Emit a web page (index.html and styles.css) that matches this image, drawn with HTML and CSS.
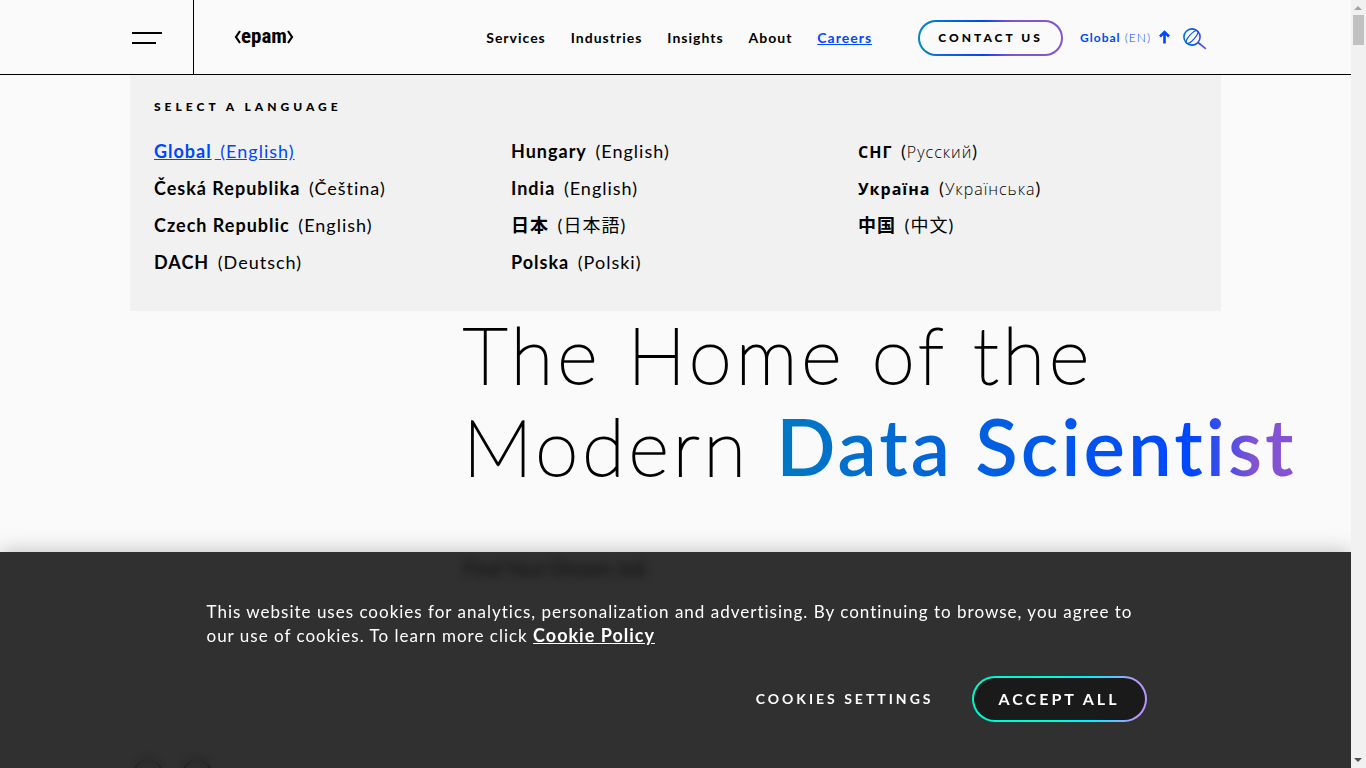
FILE: index.html
```html
<!DOCTYPE html>
<html lang="en">
<head>
<meta charset="utf-8">
<title>EPAM Careers</title>
<link rel="stylesheet" href="styles.css">
</head>
<body>
<div class="window">
  <div class="page">
    <header class="header">
      <button class="menu" type="button" aria-label="Menu"><span class="menu-line"></span><span class="menu-line menu-line-short"></span></button>
      <a class="logo" href="#">
        <svg width="7" height="14" viewBox="0 0 7 14"><path d="M6 1L2 7L6 13" fill="none" stroke="#000" stroke-width="2.200"/></svg>
        <span>epam</span>
        <svg width="7" height="14" viewBox="0 0 7 14"><path d="M1 1L5 7L1 13" fill="none" stroke="#000" stroke-width="2.200"/></svg>
      </a>
      <nav class="nav">
        <a href="#">Services</a>
        <a href="#">Industries</a>
        <a href="#">Insights</a>
        <a href="#">About</a>
        <a class="active" href="#">Careers</a>
      </nav>
      <a class="contact" href="#">CONTACT US</a>
      <button class="locale" type="button"><span><b>Global</b> (EN)</span>
        <svg width="11" height="14" viewBox="0 0 11 14"><path d="M5.500 13.500V2M1 6.500L5.500 2L10 6.500" fill="none" stroke="#0047ff" stroke-width="2.600"/></svg>
      </button>
      <button class="search" type="button" aria-label="Search">
        <svg width="24" height="22" viewBox="0 0 24 22">
          <defs><linearGradient id="lens" gradientUnits="userSpaceOnUse" x1="0" y1="0" x2="24" y2="0"><stop offset="0" stop-color="#0078c2"/><stop offset=".5" stop-color="#0047ff"/><stop offset="1" stop-color="#8453d2"/></linearGradient></defs>
          <g fill="none" stroke="url(#lens)"><circle cx="9" cy="9" r="8.100" stroke-width="1.600"/><ellipse cx="9" cy="9" rx="2.800" ry="8.300" transform="rotate(42 9 9)" stroke-width="1"/><path d="M15 14.500L23 20.800" stroke-width="1.700"/></g>
        </svg>
      </button>
    </header>
    <section class="languages">
      <h2>SELECT A LANGUAGE</h2>
      <div class="language-columns">
        <ul>
          <li><a class="active" href="#"><b>Global</b> (English)</a></li>
          <li><a href="#"><b>Česká Republika</b> (Čeština)</a></li>
          <li><a href="#"><b>Czech Republic</b> (English)</a></li>
          <li><a href="#"><b>DACH</b> (Deutsch)</a></li>
        </ul>
        <ul>
          <li><a href="#"><b>Hungary</b> (English)</a></li>
          <li><a href="#"><b>India</b> (English)</a></li>
          <li><a href="#" lang="ja"><b>日本</b> (日本語)</a></li>
          <li><a href="#"><b>Polska</b> (Polski)</a></li>
        </ul>
        <ul>
          <li><a href="#" lang="ru"><b>СНГ</b> (<span>Русский</span>)</a></li>
          <li><a href="#" lang="uk"><b>Україна</b> (<span>Українська</span>)</a></li>
          <li><a href="#" lang="zh"><b>中国</b> (中文)</a></li>
        </ul>
      </div>
    </section>
    <main class="hero">
      <h1>The Home of the<br>Modern <span class="gradient-text">Data Scientist</span></h1>
      <a class="find-job" href="#">Find Your Dream Job</a>
      <div class="slider-controls"><button type="button" aria-label="Previous"></button><button type="button" aria-label="Next"></button></div>
    </main>
    <section class="cookies">
      <div class="cookies-inner">
        <p>This website uses cookies for analytics, personalization and advertising. By continuing to browse, you agree to our use of cookies. To learn more click <a href="#">Cookie Policy</a></p>
        <div class="cookies-actions">
          <button class="settings" type="button">COOKIES SETTINGS</button>
          <button class="accept" type="button">ACCEPT ALL</button>
        </div>
      </div>
    </section>
  </div>
  <div class="scrollbar">
    <svg width="15" height="15" viewBox="0 0 15 15"><path d="M3 10H11L7 6Z" fill="#a3a3a3"/></svg>
    <div class="thumb"></div>
    <svg class="arrow-down" width="15" height="15" viewBox="0 0 15 15"><path d="M3 5H11L7 9Z" fill="#505050"/></svg>
  </div>
</div>
</body>
</html>
```
FILE: styles.css
```css
* { box-sizing: border-box; }
body {
  margin: 0;
  background: #fafafa;
  color: #000;
  font-family: Lato, "Noto Sans CJK JP", sans-serif;
}
a { color: inherit; text-decoration: none; }
button { border: 0; padding: 0; background: none; font: inherit; color: inherit; }
svg { display: block; flex: none; }
.window { display: flex; height: 100vh; overflow: hidden; }
.page { position: relative; flex: 1; display: flex; flex-direction: column; min-width: 0; overflow: hidden; }

.header {
  display: flex;
  align-items: center;
  flex: none;
  height: 75px;
  padding-right: 144px;
  border-bottom: 1px solid #000;
}
.menu {
  display: flex;
  flex-direction: column;
  justify-content: center;
  gap: 8px;
  width: 194px;
  height: 100%;
  padding: 2px 0 0 132px;
  border-right: 1px solid #000;
}
.menu-line { width: 30px; height: 2px; background: #000; }
.menu-line-short { width: 24px; }
.logo {
  display: flex;
  align-items: center;
  justify-content: space-between;
  width: 60px;
  margin-left: 40px;
  font: bold 21px "Liberation Sans Narrow", "Roboto Condensed", Roboto, sans-serif;
}
.logo span { padding-bottom: 3px; }
.nav {
  display: flex;
  gap: 25px;
  margin-left: auto;
  font-size: 14px;
  font-weight: 700;
  letter-spacing: 1px;
}
.nav .active { color: #0047ff; text-decoration: underline; }
.contact {
  display: flex;
  align-items: center;
  justify-content: center;
  width: 145px;
  height: 36px;
  margin: 2px 17px 0 46px;
  padding-bottom: 1px;
  border: 2px solid transparent;
  border-radius: 18px;
  background:
    linear-gradient(#fafafa, #fafafa) padding-box,
    linear-gradient(90deg, #0088c2, #0047ff 45%, #8453d2 65%, #8453d2) border-box;
  font-size: 12px;
  font-weight: 900;
  letter-spacing: 3px;
}
.locale {
  display: flex;
  align-items: center;
  gap: 8px;
  color: #0047ff;
  font-size: 12px;
  font-weight: 300;
  letter-spacing: 1px;
}
.locale b { font-weight: 700; }
.search { margin: 4px 0 0 13px; }

.languages {
  position: absolute;
  top: 75px;
  left: 130px;
  right: 130px;
  z-index: 1;
  padding: 23px 24px 30px;
  background: #f1f1f1;
}
.languages h2 {
  margin: 0 0 18px;
  font-size: 12px;
  line-height: 17px;
  font-weight: 900;
  letter-spacing: 4px;
}
.language-columns { display: grid; grid-template-columns: 357fr 347fr 339fr; }
.languages ul { margin: 0; padding: 0; list-style: none; }
.languages li { height: 37px; font-size: 18px; line-height: 37px; letter-spacing: 1px; white-space: nowrap; }
.languages b { margin-right: 3px; font-weight: 700; }
.languages .active { color: #0047ff; text-decoration: underline; }
.languages [lang="zh"] { font-family: Lato, "Noto Sans CJK SC", sans-serif; }
.languages [lang="ru"] b, .languages [lang="uk"] b { font-family: "Open Sans", sans-serif; font-size: 16px; }
.languages [lang] span { font-family: "Open Sans", sans-serif; font-size: 16px; font-weight: 300; }

.hero { flex: 1; padding: 233px 40px 0 463px; }
.hero h1 {
  margin: 0;
  font-size: 78px;
  line-height: 92px;
  font-weight: 200;
  letter-spacing: 4px;
  white-space: nowrap;
  -webkit-text-stroke: 2px #000;
}
.gradient-text {
  background: linear-gradient(90deg, #0078c2, #0047ff 80%, #8453d2 92%, #8453d2);
  background-clip: text;
  color: transparent;
  font-weight: 600;
  letter-spacing: 3px;
  -webkit-text-stroke: 0;
}
.find-job { display: block; margin-top: 64px; font-size: 20px; line-height: 24px; font-weight: 700; }
.slider-controls { display: flex; gap: 19px; margin: 179px 0 0 -330px; }
.slider-controls button { width: 30px; height: 30px; border: 2px solid #000; border-radius: 50%; }

.cookies {
  position: absolute;
  left: 0;
  right: 0;
  bottom: 0;
  z-index: 2;
  padding: 48px 24px 46px;
  background: rgba(26, 26, 26, .9);
  backdrop-filter: blur(5px);
  box-shadow: 0 0 20px rgba(0, 0, 0, .25);
  color: #fff;
}
.cookies-inner { max-width: 942px; margin: 0 auto; }
.cookies p { margin: 0 0 28px; padding-left: 2px; font-size: 17px; line-height: 24px; letter-spacing: 1px; }
.cookies p a { font-size: 18px; font-weight: 700; line-height: 20px; text-decoration: underline; }
.cookies-actions { display: flex; align-items: center; justify-content: flex-end; gap: 38px; }
.settings { padding-bottom: 2px; font-size: 14px; font-weight: 700; letter-spacing: 3px; }
.accept {
  width: 175px;
  height: 46px;
  padding-bottom: 2px;
  border: 2px solid transparent;
  border-radius: 23px;
  background:
    linear-gradient(#1a1a1a, #1a1a1a) padding-box,
    linear-gradient(90deg, #00f6d0, #00ffd0 45%, #00f0ff 68%, #b896ff 94%) border-box;
  font-size: 16px;
  font-weight: 700;
  letter-spacing: 3px;
}

.scrollbar { display: flex; flex-direction: column; flex: none; width: 15px; background: #f1f1f1; }
.thumb { width: 11px; height: 30px; margin-left: 2px; background: #c1c1c1; }
.arrow-down { margin-top: auto; }
```
